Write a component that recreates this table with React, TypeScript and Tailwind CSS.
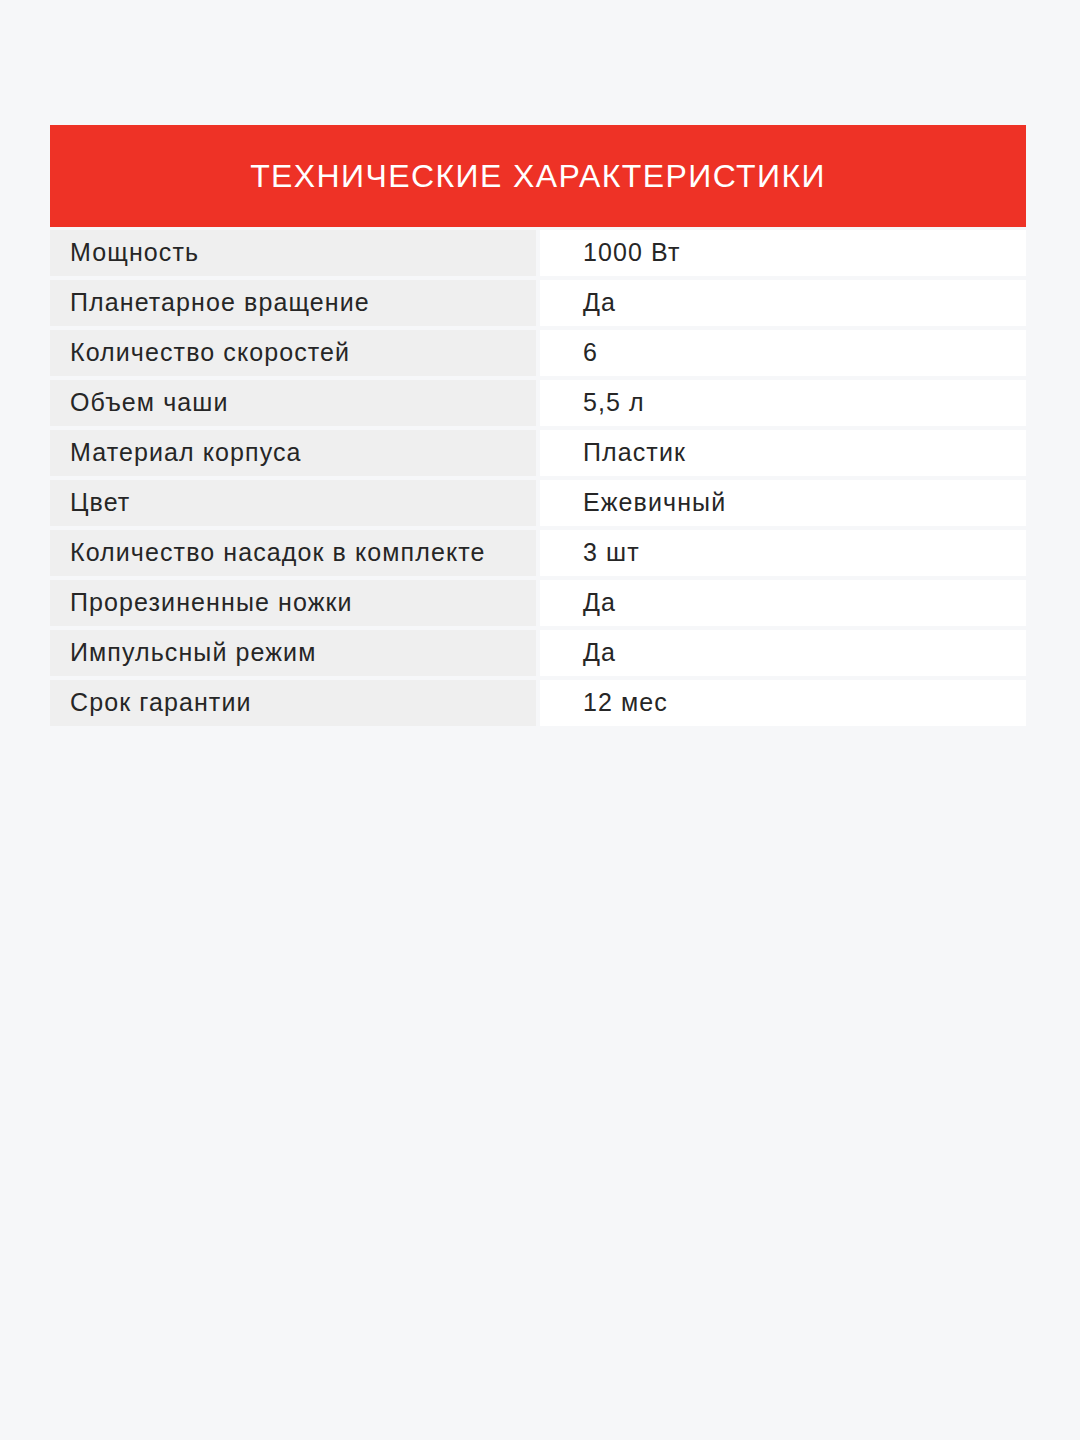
const rows: [string, string][] = [
  ["Мощность", "1000 Вт"],
  ["Планетарное вращение", "Да"],
  ["Количество скоростей", "6"],
  ["Объем чаши", "5,5 л"],
  ["Материал корпуса", "Пластик"],
  ["Цвет", "Ежевичный"],
  ["Количество насадок в комплекте", "3 шт"],
  ["Прорезиненные ножки", "Да"],
  ["Импульсный режим", "Да"],
  ["Срок гарантии", "12 мес"],
];

export default function App() {
  return (
    <div
      className="min-h-[1440px] w-[1080px] bg-[#f6f7f9] pt-[125px] pl-[50px] pr-[54px]"
      style={{ fontFamily: '"Liberation Sans", Arial, sans-serif' }}
    >
      <div className="flex h-[102px] items-center justify-center bg-[#ee3226]">
        <h1 className="text-[32px] tracking-[1.4px] text-white">ТЕХНИЧЕСКИЕ ХАРАКТЕРИСТИКИ</h1>
      </div>
      <div className="mt-[3px] flex flex-col gap-[4px]">
        {rows.map(([name, value], i) => (
          <div key={i} className="grid h-[46px] grid-cols-2 gap-[4px] text-[25px] tracking-[1.1px] text-[#262626]">
            <div className="flex items-center bg-[#efefef] pl-[20px]">{name}</div>
            <div className="flex items-center bg-white pl-[43px]">{value}</div>
          </div>
        ))}
      </div>
    </div>
  );
}
